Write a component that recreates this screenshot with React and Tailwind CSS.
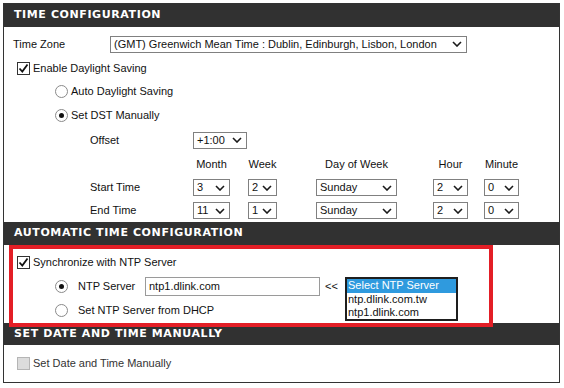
const Chevron = () => (
  <svg width="10" height="6" viewBox="0 0 10 6" className="shrink-0">
    <path d="M1 1 L5 5 L9 1" fill="none" stroke="#1a1a1a" strokeWidth="1.6" />
  </svg>
);

const Select = ({ className, value }) => (
  <div className={`flex items-center justify-between h-[17px] border border-[#808080] bg-white pl-[3px] pr-[4px] ${className}`}>
    <span className="leading-none whitespace-nowrap">{value}</span>
    <Chevron />
  </div>
);

const Checkbox = ({ checked, disabled }) => (
  <div
    className={`w-[13px] h-[13px] border flex items-center justify-center ${
      disabled ? 'border-[#b5b5b5] bg-[#dcdcdc]' : 'border-[#333] bg-white'
    }`}
  >
    {checked && (
      <svg width="11" height="11" viewBox="0 0 11 11">
        <path d="M1.5 5.5 L4.3 8.5 L9.5 1.5" fill="none" stroke="#111" strokeWidth="1.8" />
      </svg>
    )}
  </div>
);

const Radio = ({ checked }) => (
  <div className="w-[13px] h-[13px] rounded-full border border-[#8a8a8a] bg-white flex items-center justify-center">
    {checked && <div className="w-[5px] h-[5px] rounded-full bg-[#111]" />}
  </div>
);

const Header = ({ children, className }) => (
  <div
    className={`bg-[#313131] text-white flex items-center pl-[10px] font-bold text-[11px] tracking-[0.6px] ${className}`}
    style={{ fontFamily: '"DejaVu Sans", Verdana, sans-serif' }}
  >
    {children}
  </div>
);

// column widths of the DST table
const Cols = ({ label, cells }) => (
  <div className="flex items-center h-full">
    <div className="w-[103px]">{label}</div>
    <div className="w-[37px] flex justify-center">{cells[0]}</div>
    <div className="w-[29px] ml-[18px] flex justify-center">{cells[1]}</div>
    <div className="w-[81px] ml-[39px] flex justify-center">{cells[2]}</div>
    <div className="w-[35px] ml-[36px] flex justify-center">{cells[3]}</div>
    <div className="w-[35px] ml-[16px] flex justify-center">{cells[4]}</div>
  </div>
);

export default function App() {
  return (
    <div
      className="w-[564px] h-[388px] bg-white pt-[3px] pl-[3px] text-[11px] text-[#111]"
      style={{ fontFamily: '"Liberation Sans", Arial, sans-serif' }}
    >
      <div className="w-[557px] border border-[#333] flex flex-col">
        <Header className="h-[23px]">TIME CONFIGURATION</Header>

        {/* Time configuration */}
        <div className="h-[195px] pt-[5px] pl-[9px] flex flex-col">
          <div className="h-[24px] flex items-center">
            <span className="w-[97px]">Time Zone</span>
            <Select className="w-[357px]" value="(GMT) Greenwich Mean Time : Dublin, Edinburgh, Lisbon, London" />
          </div>
          <div className="h-[25px] flex items-center pl-[4px] gap-[3px]">
            <Checkbox checked />
            <span>Enable Daylight Saving</span>
          </div>
          <div className="h-[21px] flex items-center pl-[42px] gap-[3px]">
            <Radio />
            <span>Auto Daylight Saving</span>
          </div>
          <div className="h-[26px] flex items-center pl-[42px] gap-[3px]">
            <Radio checked />
            <span>Set DST Manually</span>
          </div>
          <div className="h-[24px] flex items-center pl-[77px]">
            <span className="w-[103px]">Offset</span>
            <Select className="w-[54px]" value="+1:00" />
          </div>
          <div className="h-[24px] pl-[77px]">
            <Cols label="" cells={['Month', 'Week', 'Day of Week', 'Hour', 'Minute']} />
          </div>
          <div className="h-[23px] pl-[77px]">
            <Cols
              label="Start Time"
              cells={[
                <Select className="w-[37px]" value="3" />,
                <Select className="w-[29px]" value="2" />,
                <Select className="w-[81px]" value="Sunday" />,
                <Select className="w-[35px]" value="2" />,
                <Select className="w-[35px]" value="0" />,
              ]}
            />
          </div>
          <div className="h-[23px] pl-[77px]">
            <Cols
              label="End Time"
              cells={[
                <Select className="w-[37px]" value="11" />,
                <Select className="w-[29px]" value="1" />,
                <Select className="w-[81px]" value="Sunday" />,
                <Select className="w-[35px]" value="2" />,
                <Select className="w-[35px]" value="0" />,
              ]}
            />
          </div>
        </div>

        <Header className="h-[23px]">AUTOMATIC TIME CONFIGURATION</Header>

        {/* NTP */}
        <div className="relative h-[78px] pt-[5px] pl-[13px] flex flex-col">
          <div className="h-[24px] flex items-center gap-[3px]">
            <Checkbox checked />
            <span>Synchronize with NTP Server</span>
          </div>
          <div className="h-[24px] flex items-center pl-[38px]">
            <Radio checked />
            <span className="ml-[10px] w-[67px]">NTP Server</span>
            <div className="w-[175px] h-[19px] border border-[#9a9a9a] flex items-center pl-[3px]">ntp1.dlink.com</div>
            <span className="ml-[5px]">&lt;&lt;</span>
          </div>
          <div className="h-[24px] flex items-center pl-[38px]">
            <Radio />
            <span className="ml-[10px]">Set NTP Server from DHCP</span>
          </div>

          {/* open server list */}
          <div className="absolute left-[341px] top-[32px] w-[113px] h-[44px] border-2 border-[#1e1e1e] bg-white flex flex-col leading-[13.5px] z-10">
            <div className="bg-[#2f9ade] text-white pl-[1px]">Select NTP Server</div>
            <div className="pl-[1px]">ntp.dlink.com.tw</div>
            <div className="pl-[1px]">ntp1.dlink.com</div>
          </div>

          {/* highlight annotation */}
          <div className="absolute left-[5px] top-0 w-[484px] h-[82px] border-4 border-[#e31e26] z-20 pointer-events-none" />
        </div>

        <Header className="h-[22px]">SET DATE AND TIME MANUALLY</Header>

        <div className="h-[37px] pl-[13px] flex items-center gap-[3px]">
          <Checkbox disabled />
          <span className="text-[#333]">Set Date and Time Manually</span>
        </div>
      </div>
    </div>
  );
}
